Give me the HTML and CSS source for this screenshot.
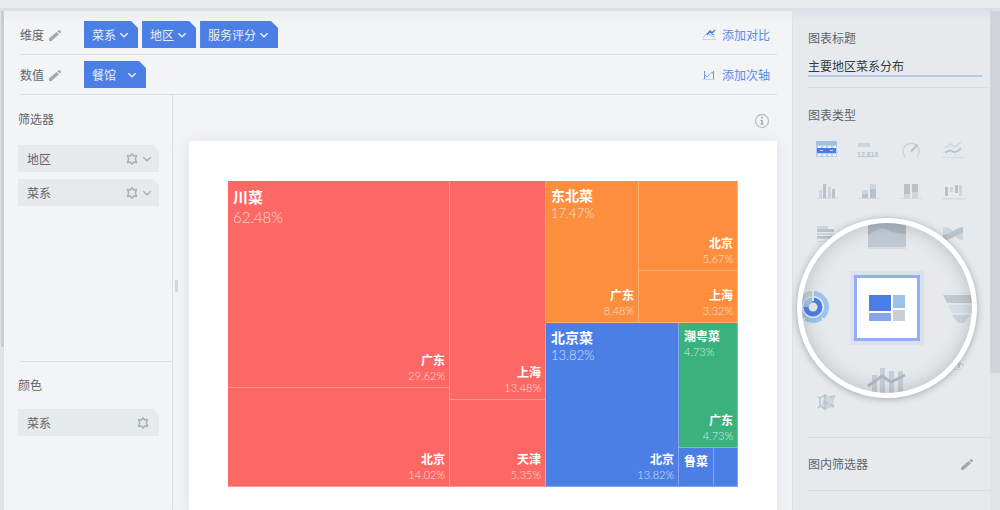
FILE: index.html
```html
<!DOCTYPE html>
<html lang="zh-CN">
<head>
<meta charset="utf-8">
<meta name="viewport" content="width=device-width, initial-scale=1">
<title>主要地区菜系分布</title>
<link rel="stylesheet" href="styles.css">
</head>
<body>
<svg class="defs" aria-hidden="true">
  <symbol id="pencil" viewBox="0 0 14 14"><path d="M1 13v-2.500L8.500 4 11 6.300 3.500 13zM9.300 3.200l1-1q.7-.6 1.500 0l1 1q.6.8 0 1.400l-1 1z"/></symbol>
  <symbol id="chevron" viewBox="0 0 10 10"><path d="M1.300 3.200 5 6.800l3.700-3.600" fill="none" stroke="currentColor" stroke-width="1.400"/></symbol>
  <symbol id="gear" viewBox="0 0 12 12"><path d="M6 .8 7.700 3l2.800-.4L9.500 5.200v1.600l1 2.600L7.700 9 6 11.200 4.300 9l-2.800.4 1-2.600V5.200l-1-2.600L4.300 3z" fill="none" stroke="currentColor" stroke-width="1.500" stroke-linejoin="round"/></symbol>
</svg>
<div class="topbar"></div>
<div class="app">
  <div class="track track-left"><div class="thumb thumb-left"></div></div>
  <main class="main">
    <div class="shelves">
      <div class="shelf">
        <span class="shelf-name">维度</span>
        <svg class="pencil"><use href="#pencil"/></svg>
        <div class="chips">
          <button class="chip">菜系<svg class="chevron"><use href="#chevron"/></svg></button>
          <button class="chip">地区<svg class="chevron"><use href="#chevron"/></svg></button>
          <button class="chip">服务评分<svg class="chevron"><use href="#chevron"/></svg></button>
        </div>
        <button class="action">
          <svg class="action-icon" viewBox="0 0 14 12"><path d="M1 9 5 4l3 2 5 3" fill="none" stroke="#9cc0ea"/><path d="M5 6 8 2l2 2 3-3M8 3l4 3" fill="none" stroke="#4c7fe6" stroke-width="1.500"/><path d="M0 10.500h14" stroke="#c3d3f0"/></svg>
          添加对比</button>
      </div>
      <div class="shelf">
        <span class="shelf-name">数值</span>
        <svg class="pencil"><use href="#pencil"/></svg>
        <div class="chips">
          <button class="chip chip-wide">餐馆<svg class="chevron"><use href="#chevron"/></svg></button>
        </div>
        <button class="action">
          <svg class="action-icon" viewBox="0 0 14 12"><path d="M2.500 2v8M11.500 2v8" stroke="#6f97e6"/><path d="m3 6 2 2 5-5 1 2" fill="none" stroke="#8db4ea"/><path d="M1 10.500h12" stroke="#c3d3f0"/></svg>
          添加次轴</button>
      </div>
    </div>
    <div class="work">
      <aside class="panel">
        <section class="group group-filters">
          <h2 class="label">筛选器</h2>
          <button class="field">地区<span class="field-icons"><svg class="gear"><use href="#gear"/></svg><svg class="chevron"><use href="#chevron"/></svg></span></button>
          <button class="field">菜系<span class="field-icons"><svg class="gear"><use href="#gear"/></svg><svg class="chevron"><use href="#chevron"/></svg></span></button>
        </section>
        <section class="group">
          <h2 class="label">颜色</h2>
          <button class="field">菜系<span class="field-icons"><svg class="gear"><use href="#gear"/></svg></span></button>
        </section>
      </aside>
      <section class="canvas">
        <span class="grip"></span>
        <svg class="info" viewBox="0 0 16 16"><circle cx="8" cy="8" r="6.500" fill="none" stroke="#b9bfc4" stroke-width="1.300"/><path d="M7 4h2v1.600H7zM6.300 7H9v3.800h1v1H6.200v-1h1V8h-.9z" fill="#aab1b6"/></svg>
        <div class="sheet">
          <div class="treemap">
            <div class="stack stack-a red">
              <div class="cell"><p class="head head-lg"><b>川菜</b><span>62.48%</span></p><p class="leaf"><b>广东</b><span>29.62%</span></p></div>
              <div class="cell"><p class="leaf"><b>北京</b><span>14.02%</span></p></div>
            </div>
            <div class="stack stack-b red">
              <div class="cell"><p class="leaf"><b>上海</b><span>13.48%</span></p></div>
              <div class="cell"><p class="leaf"><b>天津</b><span>5.35%</span></p></div>
            </div>
            <div class="stack stack-c">
              <div class="split split-orange orange">
                <div class="cell"><p class="head head-md"><b>东北菜</b><span>17.47%</span></p><p class="leaf"><b>广东</b><span>8.48%</span></p></div>
                <div class="stack stack-d">
                  <div class="cell"><p class="leaf"><b>北京</b><span>5.67%</span></p></div>
                  <div class="cell"><p class="leaf"><b>上海</b><span>3.32%</span></p></div>
                </div>
              </div>
              <div class="split split-blue">
                <div class="cell blue"><p class="head head-md"><b>北京菜</b><span>13.82%</span></p><p class="leaf"><b>北京</b><span>13.82%</span></p></div>
                <div class="stack stack-e">
                  <div class="cell green"><p class="head"><b>潮粤菜</b><span>4.73%</span></p><p class="leaf"><b>广东</b><span>4.73%</span></p></div>
                  <div class="split split-last blue">
                    <div class="cell"><p class="head"><b>鲁菜</b></p></div>
                    <div class="cell"></div>
                  </div>
                </div>
              </div>
            </div>
          </div>
        </div>
      </section>
    </div>
  </main>
  <aside class="sidebar">
    <section class="block">
      <label class="label" for="chart-title">图表标题</label>
      <input class="title-input" id="chart-title" type="text" value="主要地区菜系分布">
    </section>
    <section class="block block-types">
      <h2 class="label">图表类型</h2>
      <div class="types">
        <button class="type" aria-label="表格"><svg viewBox="0 0 42 42"><path fill="#9dc2e6" d="M11 13h21v4H11z"/><path fill="#b3cdec" d="M11 17h21v12H11z"/><path fill="#f4f8fc" d="M13 18h3v2h-3zm5 0h3v2h-3zm5 0h3v2h-3zm5 0h3v2h-3zM13 26h3v2h-3zm5 0h3v2h-3zm5 0h3v2h-3zm5 0h3v2h-3z"/><path fill="#4a7de6" d="M12 20h19v5H12z"/><path fill="#c9dafa" d="M15 22h3v1h-3zm10 0h3v1h-3z"/></svg></button>
        <button class="type" aria-label="指标卡"><svg viewBox="0 0 42 42"><path class="lt" d="M11 15h12v4H11z"/><text class="num" x="10" y="29">12,816</text></svg></button>
        <button class="type" aria-label="仪表盘"><svg viewBox="0 0 42 42"><path class="ls" d="M16.500 29a8 8 0 1 1 11.500-.5" stroke-width="1.600"/><path class="ds" d="m22 23.500 6.500-7" stroke-width="2"/></svg></button>
        <button class="type" aria-label="折线图"><svg viewBox="0 0 42 42"><path class="ls" d="m14 20 6-4 4 3 6-5" stroke-width="1.500"/><path class="ds" d="m14 24.500 5-2 4 1.500q4 0 7-4" stroke-width="1.800"/><path class="base" d="M11 29h23v1H11z"/></svg></button>
        <button class="type" aria-label="柱状图"><svg viewBox="0 0 42 42"><path class="lt" d="M14 20h3v8h-3zM23 17h3v11h-3z"/><path class="dk" d="M18 14h3v14h-3zM27 19h3v9h-3z"/><path class="base" d="M11 28h22v1H11z"/></svg></button>
        <button class="type" aria-label="堆积柱状图"><svg viewBox="0 0 42 42"><path class="lt" d="M15 20h6v4h-6zM23 14h6v5h-6z"/><path class="dk" d="M15 24h6v4h-6zM23 19h6v9h-6z"/><path class="base" d="M11 28h22v1H11z"/></svg></button>
        <button class="type" aria-label="百分比柱状图"><svg viewBox="0 0 42 42"><path class="dk" d="M15 14h6v10h-6zM23 14h6v8h-6z"/><path class="lt" d="M15 24h6v4h-6zM23 22h6v6h-6z"/><path class="base" d="M11 28h22v1H11z"/></svg></button>
        <button class="type" aria-label="瀑布图"><svg viewBox="0 0 42 42"><path class="dk" d="M14 17h3v9h-3zM24 15h3v8h-3z"/><path class="lt" d="M19 17h3v5h-3zM28 15h3v11h-3z"/><path class="base" d="M11 28h24v1.500H11z"/></svg></button>
        <button class="type" aria-label="条形图"><svg viewBox="0 0 42 42"><path class="lt" d="M12 14h11v3H12zM12 21h16v2H12z"/><path class="dk" d="M12 17h17v3H12zM12 24h16v2.500H12z"/><path class="base" d="M12 29h17v1H12z"/></svg></button>
        <span class="type"></span>
        <span class="type"></span>
        <button class="type" aria-label="桑基图"><svg viewBox="0 0 42 42"><path class="lt" d="M12 15q6 0 9 3t11-3v13q-5 0-9-4t-11 4z"/><path class="dk" d="M12 27v-4q6-1 10-4t10-4v6q-5 1-9 4t-11 3z"/><path class="base" d="M11 29h8v1h-8z"/></svg></button>
        <span class="type"></span><span class="type"></span><span class="type"></span><span class="type"></span>
        <span class="type"></span><span class="type"></span><span class="type"></span><span class="type"></span>
        <button class="type" aria-label="散点图"><svg viewBox="0 0 42 42"><path class="lt" d="M18 28l6-1 4 6-4 2-6-3z"/></svg></button>
        <span class="type"></span><span class="type"></span>
        <button class="type" aria-label="词云"><svg viewBox="0 0 42 42"><path class="dk" d="M26 25h4v1.500h-1.200V30h-1.600v-3.500H26z"/><path class="lt" d="M31 25h1.500v4H31zM23 31h8v1h-8zM18 28h6v1h-6zM28 18h1v4h-1z"/></svg></button>
        <button class="type" aria-label="雷达图"><svg viewBox="0 0 42 42"><path class="lt" d="m20 14 5 3 5-.5-2 5.500 2 6-5-.5-5 2.500-4-3z"/><path class="ds" d="m20 15-5 3v8l5 3zM15 18l-2-1m2 9-2 2m7-6 3 2m2-7 5-1m-5 9 4 1" stroke-width="1.300"/></svg></button>
      </div>
      <div class="lens">
        <svg class="lens-art" viewBox="0 0 170 170" aria-hidden="true">
          <g fill="none" stroke-width="5">
            <circle cx="11" cy="84" r="13.500" stroke="#9dc3ea"/>
            <path d="M-2.500 84A13.500 13.500 0 0 1 9.500 70.500" stroke="#c3ccd4"/>
            <circle cx="11" cy="84" r="7" stroke="#4a7de6"/>
            <path d="M4 84a7 7 0 0 1 6.500-7" stroke="#9dc3ea"/>
            <path d="M11 66v12M3 95l-6 5m23-5 5 5" stroke="#e5e9ec" stroke-width="2"/>
          </g>
          <path fill="#aeb7c0" d="M66 0h38v25H66z"/>
          <path fill="#c0cad4" d="M66 12 73 8q6-5 13-1t18 4v14H66z"/>
          <path fill="#d5dde4" d="M66 24h38v2H66z"/>
          <path fill="#c1c9d0" d="M141 72h30v8h-26z"/>
          <path fill="#d8dfe7" d="M146 82h25v8h-21z"/>
          <path fill="#cbd4de" d="M150 92h18l-6 8h-6z"/>
          <path fill="#c6cfd8" d="M70 152h5v20h-5zM78 145h5v27h-5zM87 148h5v24h-5zM96 148h5v24h-5z"/>
          <path d="m66 163 14-10 9 6 14-7" fill="none" stroke="#afb9c3" stroke-width="3"/>
        </svg>
        <button class="picked" aria-label="树图"><svg viewBox="0 0 36 28"><path fill="#4a7de6" d="M0 1h22v16H0z"/><path fill="#9cc2e8" d="M24 1h12v13H24z"/><path fill="#86a6ee" d="M0 19h22v8H0z"/><path fill="#c8ced3" d="M24 16h12v11H24z"/></svg></button>
      </div>
    </section>
    <section class="block block-row">
      <h2 class="label">图内筛选器</h2>
      <svg class="pencil"><use href="#pencil"/></svg>
    </section>
  </aside>
  <div class="track"><div class="thumb"></div></div>
</div>
</body>
</html>
```
FILE: styles.css
```css
* { box-sizing: border-box; }

body {
  margin: 0;
  min-height: 100vh;
  display: flex;
  flex-direction: column;
  background: #f3f4f6;
  color: #5f656c;
  font: 12px/16px "Noto Sans CJK SC", sans-serif;
}

h2, p { margin: 0; font: inherit; }

button {
  border: 0;
  padding: 0;
  background: none;
  color: inherit;
  font: inherit;
}

svg { display: block; flex: none; }
.defs { position: absolute; width: 0; height: 0; }

.topbar {
  height: 11px;
  background: #e9edf0;
  border-bottom: 3px solid #dbdfe8;
}

.app { flex: 1; display: flex; }

.track { width: 10px; background: #e0e4e7; }
.thumb { height: 362px; background: #d1d5d9; }
.track-left { width: 4px; padding-left: 1px; background: #dfe4e8; }
.thumb-left { height: 336px; background: #c9ced2; }

.main {
  flex: 1;
  min-width: 0;
  display: flex;
  flex-direction: column;
  background: linear-gradient(#eceef2, #f3f4f6 12px);
}

/* dimension and measure shelves */
.shelves { padding: 4px 15px 0 16px; }

.shelf {
  display: flex;
  align-items: center;
  padding: 6px 0;
  border-bottom: 1px solid #dcdfe2;
}

.pencil { width: 14px; height: 14px; fill: #a3a9ae; }
.shelf .pencil { margin: 0 22px 0 4px; }
.chips { display: flex; gap: 4px; flex: 1; }

.chip {
  display: flex;
  align-items: center;
  gap: 3px;
  height: 27px;
  padding: 0 9px 0 8px;
  background: #4c7fe6;
  color: #e9effc;
  clip-path: polygon(0 0, calc(100% - 7px) 0, 100% 7px, 100% 100%, 0 100%);
}

.chip-wide { gap: 11px; }
.chevron { width: 10px; height: 10px; }

.action {
  display: flex;
  align-items: center;
  gap: 6px;
  padding-right: 7px;
  color: #5a89e8;
}

.action-icon { width: 14px; height: 12px; }

/* side panel with filter and colour fields */
.work { flex: 1; display: flex; }
.panel { width: 169px; border-right: 1px solid #dcdfe2; }

.group { padding: 15px 13px 0 14px; }
.group-filters { min-height: 267px; padding-top: 16px; position: relative; }
.group-filters::after {
  content: "";
  position: absolute;
  left: 16px;
  right: 0;
  bottom: 0;
  border-bottom: 1px solid #dcdfe2;
}

.label { display: block; }
.group .label { margin-bottom: 16px; }
.group-filters .label { margin-bottom: 18px; }

.field {
  display: flex;
  align-items: center;
  justify-content: space-between;
  width: 100%;
  height: 27px;
  margin-bottom: 7px;
  padding: 0 7px 0 9px;
  background: #e6eaed;
  clip-path: polygon(0 0, calc(100% - 6px) 0, 100% 6px, 100% 100%, 0 100%);
}

.field-icons { display: flex; align-items: center; gap: 4px; color: #a9b1b7; }
.gear { width: 12px; height: 12px; }
.field-icons .gear:last-child { margin-right: 3px; }

/* chart sheet */
.canvas {
  position: relative;
  flex: 1;
  min-width: 0;
  display: flex;
  flex-direction: column;
  padding: 18px 15px 0 16px;
}

.grip {
  position: absolute;
  left: 2px;
  top: 185px;
  width: 3px;
  height: 12px;
  background: #d3d7da;
}

.info { width: 16px; height: 16px; margin: 0 7px 12px auto; }

.sheet {
  flex: 1;
  padding: 40px 39px 20px;
  background: #fff;
  box-shadow: 0 2px 14px rgba(130, 155, 175, 0.22);
}

.treemap {
  display: grid;
  grid-template-columns: 222fr 96fr 192fr;
  aspect-ratio: 5 / 3;
  color: #fff;
}

.stack, .split { display: grid; min-width: 0; min-height: 0; }
.stack-a { grid-template-rows: 207fr 99fr; }
.stack-b { grid-template-rows: 219fr 87fr; }
.stack-c { grid-template-rows: 142fr 164fr; }
.stack-d { grid-template-rows: 90fr 52fr; }
.stack-e { grid-template-rows: 125fr 39fr; }
.split-orange { grid-template-columns: 93fr 99fr; }
.split-blue { grid-template-columns: 133fr 59fr; }
.split-last { grid-template-columns: 35fr 24fr; }

.red { background: #fd6864; }
.orange { background: #fc8e3e; }
.blue { background: #4c7fe6; }
.green { background: #39b27d; }

.cell {
  display: flex;
  flex-direction: column;
  justify-content: space-between;
  min-width: 0;
  min-height: 0;
  padding: 5px 5px 4px;
  box-shadow: inset -1px -1px rgba(255, 255, 255, 0.3);
  white-space: nowrap;
}

.head, .leaf { display: flex; flex-direction: column; }
.head b, .leaf b { font-weight: 700; }
.head span, .leaf span {
  font-family: Lato, sans-serif;
  font-size: 11px;
  font-weight: 300;
  opacity: 0.75;
}
.leaf { margin-top: auto; text-align: right; }
.head-md { font-size: 14px; line-height: 18px; }
.head-md span { font-size: 13px; }
.head-lg { font-size: 15px; line-height: 21px; }
.head-lg span { font-size: 15px; }

/* chart settings */
.sidebar {
  width: 198px;
  padding-left: 15px;
  background: linear-gradient(#dfe3e8, #e6eaec 10px);
  border-left: 1px solid #dde1e4;
}

.block {
  padding: 19px 0 10px;
  border-bottom: 1px solid #d9dde0;
}

.title-input {
  display: block;
  width: calc(100% - 8px);
  height: 22px;
  margin-top: 9px;
  padding: 0;
  border: 0;
  border-bottom: 2px solid #b3c7f1;
  background: none;
  color: #343a42;
  font: inherit;
  outline: 0;
}

.block-types { position: relative; padding-bottom: 15px; }

.types {
  display: grid;
  grid-template-columns: repeat(4, 42px);
  grid-auto-rows: 42px;
  margin: 5px 0 0 -3px;
}

.type svg { width: 42px; height: 42px; }
.lt { fill: #ccd6de; }
.dk { fill: #b8c2ca; }
.base { fill: #d5dbe0; }
.ls { fill: none; stroke: #ccd4da; }
.ds { fill: none; stroke: #b8c2ca; }
.num { fill: #b8c1c9; font: 700 7px "Liberation Sans", sans-serif; }

/* magnified view of the selected chart type */
.lens {
  position: absolute;
  left: -11px;
  top: 130px;
  width: 180px;
  height: 180px;
  display: grid;
  place-items: center;
  overflow: hidden;
  border: 5px solid #fff;
  border-radius: 50%;
  background: #e6eaec;
  box-shadow: 0 1px 7px rgba(80, 85, 90, 0.45);
}

.lens::after {
  content: "";
  position: absolute;
  inset: 0;
  border-radius: 50%;
  box-shadow: inset 0 0 18px rgba(90, 95, 100, 0.35);
  pointer-events: none;
}

.lens-art { position: absolute; inset: 0; }

.picked {
  position: relative;
  display: grid;
  place-items: center;
  width: 66px;
  height: 66px;
  border: 3px solid #94aff1;
  background: #fff;
  box-shadow: 0 0 0 4px #dce2ec;
}

.picked svg { width: 36px; height: 28px; }

.block-row {
  display: flex;
  align-items: center;
  justify-content: space-between;
  padding: 18px 16px 18px 0;
}
```
